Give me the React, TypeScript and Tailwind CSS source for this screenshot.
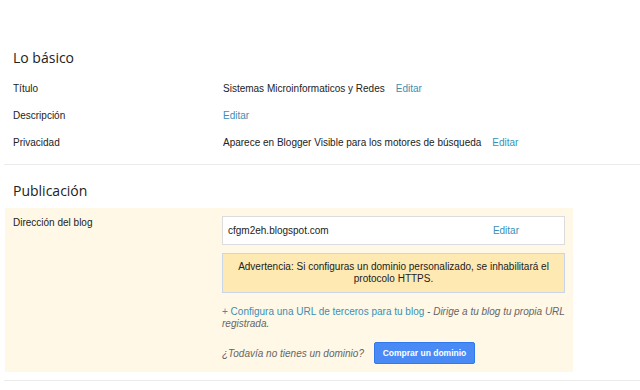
import React from "react";

const body = { fontFamily: '"Liberation Sans", Arial, sans-serif' };
const head = { fontFamily: '"Open Sans", "Liberation Sans", sans-serif' };

function Row({ label, children }: { label: string; children: React.ReactNode }) {
  return (
    <div className="flex h-[27px] items-center text-[10px] text-[#222]">
      <div className="w-[223px] shrink-0 pl-[13px]">{label}</div>
      <div className="flex items-center">{children}</div>
    </div>
  );
}

export default function App() {
  const link = "text-[#3a8fb7]";
  return (
    <div className="w-[640px] h-[390px] bg-white overflow-hidden" style={body}>
      <div className="pt-[48px]">
        <h2 className="pl-[13px] text-[14px] leading-[20px] text-[#222]" style={head}>
          Lo básico
        </h2>
        <div className="mt-[7px]">
          <Row label="Título">
            <span>Sistemas Microinformaticos y Redes</span>
            <span className={`ml-[11px] ${link}`}>Editar</span>
          </Row>
          <Row label="Descripción">
            <span className={link}>Editar</span>
          </Row>
          <Row label="Privacidad">
            <span>Aparece en Blogger Visible para los motores de búsqueda</span>
            <span className={`ml-[11px] ${link}`}>Editar</span>
          </Row>
        </div>
        <div className="ml-[4px] mt-[8px] border-t border-[#ebebeb]" />
        <h2 className="mt-[16px] pl-[13px] text-[14px] leading-[20px] text-[#222]" style={head}>
          Publicación
        </h2>
        <div className="ml-[5px] mt-[7px] flex w-[568px] bg-[#fff8e6] pt-[8px] pb-[8px] text-[10px] text-[#222]">
          <div className="w-[217px] shrink-0 pl-[8px] leading-[13px]">Dirección del blog</div>
          <div className="w-[343px]">
            <div className="flex h-[29px] items-center justify-between border border-[#dcdcdc] bg-white pl-[5px] pr-[45px]">
              <span>cfgm2eh.blogspot.com</span>
              <span className={link}>Editar</span>
            </div>
            <div className="mt-[8px] flex h-[40px] items-center justify-center border border-[#c9d6ea] bg-[#fee9b3] px-[10px] text-center leading-[12.5px]">
              Advertencia: Si configuras un dominio personalizado, se inhabilitará el protocolo HTTPS.
            </div>
            <p className="mt-[13px] leading-[12px]">
              <span className={link}>+ Configura una URL de terceros para tu blog</span>{" "}
              <span className="italic text-[#666]">- Dirige a tu blog tu propia URL registrada.</span>
            </p>
            <div className="mt-[12px] flex items-center">
              <span className="italic text-[#666]">¿Todavía no tienes un dominio?</span>
              <button className="ml-[10px] flex h-[22px] w-[101px] items-center justify-center rounded-[2px] border border-[#3079ed] bg-[#4a8af4] text-[8.5px] font-bold text-white">
                Comprar un dominio
              </button>
            </div>
          </div>
        </div>
        <div className="ml-[4px] mt-[8px] border-t border-[#ebebeb]" />
      </div>
    </div>
  );
}
